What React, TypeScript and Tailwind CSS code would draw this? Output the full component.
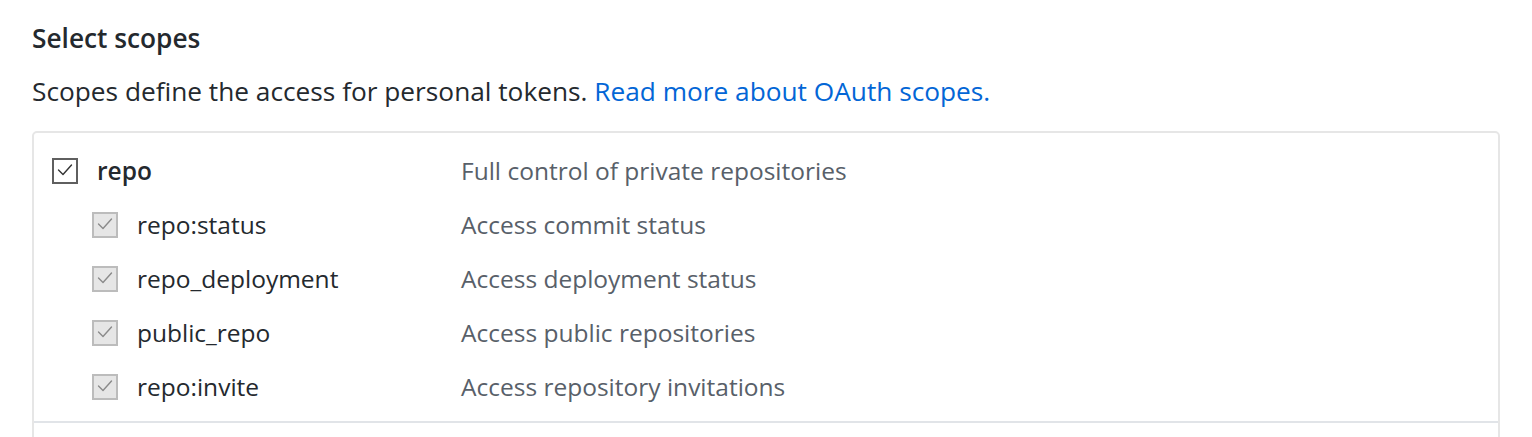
import React from "react";

function Check({ disabled }: { disabled?: boolean }) {
  return (
    <span
      className={
        disabled
          ? "flex h-[26px] w-[26px] shrink-0 items-center justify-center border-2 border-[#bcbcbc] bg-[#e6e6e6]"
          : "flex h-[26px] w-[26px] shrink-0 items-center justify-center border-2 border-[#5f5f5f] bg-white"
      }
    >
      <svg width="22" height="22" viewBox="0 0 22 22" fill="none">
        <path
          d="M4.5 10 L9 14.5 L17.5 5"
          stroke={disabled ? "#8a8a8a" : "#333333"}
          strokeWidth="1.4"
          strokeLinecap="round"
          strokeLinejoin="round"
        />
      </svg>
    </span>
  );
}

const subs = [
  ["repo:status", "Access commit status"],
  ["repo_deployment", "Access deployment status"],
  ["public_repo", "Access public repositories"],
  ["repo:invite", "Access repository invitations"],
];

export default function App() {
  return (
    <div
      className="h-[437px] w-[1532px] overflow-hidden bg-white pl-[32px] pr-[32px] text-[#24292e]"
      style={{ fontFamily: '"Open Sans", "Noto Sans", sans-serif' }}
    >
      <div className="pt-[20px] text-[26.25px] font-semibold leading-[36px]">Select scopes</div>
      <p className="mt-[17px] text-[26.25px] leading-[36px]">
        Scopes define the access for personal tokens.{" "}
        <a className="text-[#0366d6]">Read more about OAuth scopes.</a>
      </p>
      <div className="mt-[22px] h-[400px] rounded-[5px] border-2 border-[#e6e6e6]">
        <div className="pt-[11px]">
          <div className="grid h-[54px] grid-cols-[427px_1fr] items-center">
            <div className="flex items-center pl-[18px]">
              <Check />
              <span className="ml-[19px] text-[24.5px] font-semibold">repo</span>
            </div>
            <div className="text-[24.5px] text-[#586069]">Full control of private repositories</div>
          </div>
          {subs.map(([k, d]) => (
            <div key={k} className="grid h-[54px] grid-cols-[427px_1fr] items-center">
              <div className="flex items-center pl-[58px]">
                <Check disabled />
                <span className="ml-[19px] text-[24.5px]">{k}</span>
              </div>
              <div className="text-[24.5px] text-[#586069]">{d}</div>
            </div>
          ))}
        </div>
        <div className="mt-[7px] border-t-2 border-[#e1e4e8]" />
      </div>
    </div>
  );
}
